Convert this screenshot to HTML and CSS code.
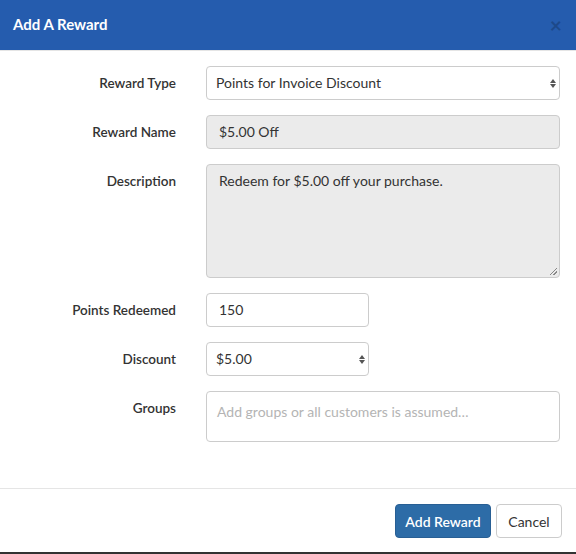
FILE: index.html
```html
<!DOCTYPE html>
<html>
<head>
<meta charset="utf-8">
<link rel="stylesheet" href="styles.css">
</head>
<body>
<div class="modal">
  <div class="modal-header">
    <h4 class="modal-title">Add A Reward</h4>
    <span class="close">&times;</span>
  </div>
  <div class="modal-body">
    <div class="row">
      <label class="label">Reward Type</label>
      <div class="field">
        <div class="control select">Points for Invoice Discount<span class="arrows"><i class="up"></i><i class="down"></i></span></div>
      </div>
    </div>
    <div class="row">
      <label class="label">Reward Name</label>
      <div class="field"><div class="control disabled">$5.00 Off</div></div>
    </div>
    <div class="row">
      <label class="label">Description</label>
      <div class="field"><div class="control disabled textarea">Redeem for $5.00 off your purchase.<span class="grip"></span></div></div>
    </div>
    <div class="row">
      <label class="label">Points Redeemed</label>
      <div class="field"><div class="control short">150</div></div>
    </div>
    <div class="row">
      <label class="label">Discount</label>
      <div class="field"><div class="control select short">$5.00<span class="arrows"><i class="up"></i><i class="down"></i></span></div></div>
    </div>
    <div class="row">
      <label class="label">Groups</label>
      <div class="field"><div class="control groups">Add groups or all customers is assumed…</div></div>
    </div>
  </div>
  <div class="modal-footer">
    <button class="btn btn-primary">Add Reward</button>
    <button class="btn btn-default">Cancel</button>
  </div>
</div>
</body>
</html>
```
FILE: styles.css
```css
* { box-sizing: border-box; }
html, body { margin: 0; padding: 0; }
body {
  font-family: Lato, "Open Sans", sans-serif;
  font-size: 14px;
  color: #333;
  background: #fff;
}
.modal {
  width: 576px;
  height: 554px;
  display: flex;
  flex-direction: column;
  border-bottom: 2px solid #333;
}
.modal-header {
  height: 51px;
  flex: none;
  background: #255cae;
  border-bottom: 1px solid #e5e5e5;
  display: flex;
  align-items: center;
  justify-content: space-between;
  padding: 0 14px 2px 13px;
}
.modal-title {
  margin: 0;
  color: #fff;
  font-size: 15px;
  font-weight: 700;
}
.close {
  color: #000;
  opacity: 0.2;
  font-size: 21px;
  font-weight: 700;
  line-height: 1;
}
.modal-body {
  flex: 1;
  padding: 15px 16px 0 0;
  display: flex;
  flex-direction: column;
  gap: 15px;
}
.row {
  display: flex;
  align-items: flex-start;
  gap: 30px;
}
.label {
  width: 176px;
  flex: none;
  text-align: right;
  font-weight: 600;
  font-size: 13.5px;
  padding-top: 8px;
  line-height: 18px;
  height: 34px;
}
.field { flex: 1; }
.control {
  position: relative;
  height: 34px;
  border: 1px solid #ccc;
  border-radius: 4px;
  padding: 7px 12px;
  line-height: 18px;
  background: #fff;
  white-space: nowrap;
  overflow: hidden;
}
.select { padding-left: 9px; }
.disabled { background: #ebebeb; }
.textarea { height: 114px; }
.short { width: 163px; }
.groups { height: 51px; color: #b4b4b4; padding: 11px 10px 0; }
.arrows {
  position: absolute;
  right: 3px;
  top: 12px;
  display: flex;
  flex-direction: column;
  gap: 1px;
}
.arrows i {
  width: 0; height: 0;
  border-left: 3.5px solid transparent;
  border-right: 3.5px solid transparent;
}
.arrows .up { border-bottom: 4px solid #555; }
.arrows .down { border-top: 4px solid #555; }
.grip {
  position: absolute;
  right: 2px; bottom: 2px;
  width: 7px; height: 7px;
  background: linear-gradient(135deg, transparent 45%, #888 45%, #888 55%, transparent 55%, transparent 70%, #888 70%, #888 80%, transparent 80%);
}
.modal-footer {
  height: 64px;
  flex: none;
  border-top: 1px solid #e5e5e5;
  display: flex;
  justify-content: flex-end;
  align-items: flex-start;
  gap: 5px;
  padding: 15px 14px 0 0;
}
.btn {
  font-family: inherit;
  font-size: 14px;
  height: 34px;
  border-radius: 4px;
  padding: 0;
  border: 1px solid #ccc;
  white-space: nowrap;
  cursor: pointer;
}
.btn-primary {
  background: #2d6ca7;
  border-color: #285f94;
  color: #fff;
  font-weight: 600;
  width: 96px;
}
.btn-default {
  background: #fff;
  color: #333;
  width: 66px;
}
```
